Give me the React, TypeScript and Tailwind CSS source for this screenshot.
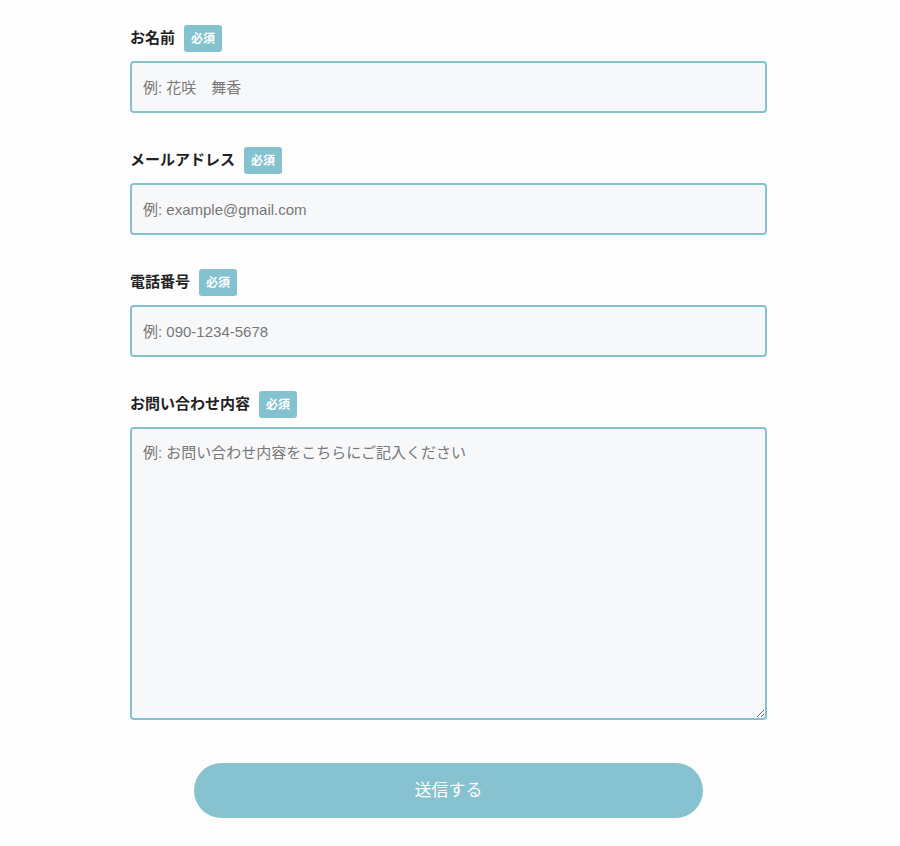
import type { ReactNode } from 'react'

const FONT = '"Liberation Sans", "Noto Sans CJK JP", sans-serif'

const Label = ({ label }: { label: string }) => (
  <div className="flex items-center gap-[9px] h-[27px] mb-[9px]">
    <span className="text-[15px] font-bold text-[#222]">{label}</span>
    <span className="h-[27px] px-[7px] flex items-center rounded-[3px] bg-[#85c2cf] text-white text-[12px] font-bold">
      必須
    </span>
  </div>
)

const Field = ({ label, children }: { label: string; children: ReactNode }) => (
  <div className="mb-[34px]">
    <Label label={label} />
    {children}
  </div>
)

const inputCls =
  'w-full h-[52px] px-[11px] rounded-[4px] border-2 border-[#85c2cf] bg-[#f7f8fa] text-[15px] text-[#333] placeholder:text-[#777] outline-none'

export default function App() {
  return (
    <div className="min-h-screen bg-[#fdfdfd]" style={{ fontFamily: FONT }}>
      <form className="w-[637px] ml-[130px] pt-[25px]" onSubmit={e => e.preventDefault()}>
        <Field label="お名前">
          <input className={inputCls} placeholder="例: 花咲　舞香" />
        </Field>
        <Field label="メールアドレス">
          <input className={inputCls} placeholder="例: example@gmail.com" />
        </Field>
        <Field label="電話番号">
          <input className={inputCls} placeholder="例: 090-1234-5678" />
        </Field>
        <div className="mb-[43px]">
          <Label label="お問い合わせ内容" />
          <textarea
            className="block w-full h-[293px] px-[11px] py-[13px] rounded-[4px] border-2 border-[#85c2cf] bg-[#f7f8fa] text-[15px] text-[#333] placeholder:text-[#777] outline-none"
            placeholder="例: お問い合わせ内容をこちらにご記入ください"
          />
        </div>
        <button
          type="submit"
          className="block mx-auto w-[509px] h-[55px] rounded-full bg-[#86c2cf] text-white text-[17px]"
        >
          送信する
        </button>
      </form>
    </div>
  )
}
